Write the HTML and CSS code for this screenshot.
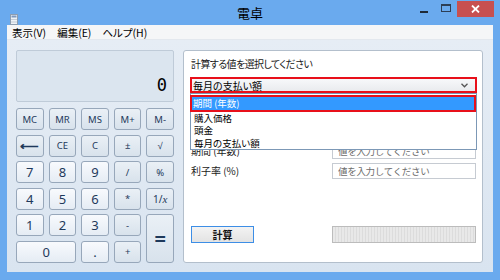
FILE: index.html
```html
<!DOCTYPE html>
<html lang="ja">
<head>
    <meta charset="UTF-8">
    <title>電卓</title>
    <link rel="stylesheet" href="styles.css">
</head>
<body>
    <div class="window">
        <div class="titlebar">
            <div class="title-left">
                <svg class="app-icon" width="8" height="11" viewBox="0 0 8 11">
                    <rect x="0.5" y="0.5" width="7" height="10" fill="#eef2f6" stroke="#8d9db0"/>
                    <rect x="1.5" y="1.5" width="5" height="2" fill="#7d98bd"/>
                    <rect x="1.5" y="5" width="1" height="1" fill="#9aa8b8"/>
                    <rect x="3.5" y="5" width="1" height="1" fill="#9aa8b8"/>
                    <rect x="5.5" y="5" width="1" height="1" fill="#9aa8b8"/>
                    <rect x="1.5" y="7.5" width="1" height="1" fill="#9aa8b8"/>
                    <rect x="3.5" y="7.5" width="1" height="1" fill="#9aa8b8"/>
                    <rect x="5.5" y="7.5" width="1" height="1" fill="#9aa8b8"/>
                </svg>
            </div>
            <div class="title">電卓</div>
            <div class="controls">
                <span class="ctl"><span class="min-icon"></span></span>
                <span class="ctl"><span class="max-icon"></span></span>
                <span class="close">
                    <svg width="9" height="8" viewBox="0 0 9 8"><path d="M1 0.5 L8 7.5 M8 0.5 L1 7.5" stroke="#fff" stroke-width="1.8"/></svg>
                </span>
            </div>
        </div>

        <div class="client">
            <div class="menubar">
                <span>表示(V)</span>
                <span>編集(E)</span>
                <span>ヘルプ(H)</span>
            </div>

            <div class="content">
                <div class="calc">
                    <div class="display">0</div>
                    <div class="keys">
                        <button class="key fn">MC</button>
                        <button class="key fn">MR</button>
                        <button class="key fn">MS</button>
                        <button class="key fn">M+</button>
                        <button class="key fn">M-</button>

                        <button class="key fn arrow">⟵</button>
                        <button class="key fn">CE</button>
                        <button class="key fn">C</button>
                        <button class="key fn">±</button>
                        <button class="key fn">√</button>

                        <button class="key num">7</button>
                        <button class="key num">8</button>
                        <button class="key num">9</button>
                        <button class="key fn">/</button>
                        <button class="key fn">%</button>

                        <button class="key num">4</button>
                        <button class="key num">5</button>
                        <button class="key num">6</button>
                        <button class="key fn">*</button>
                        <button class="key fn inv">1/<i>x</i></button>

                        <button class="key num">1</button>
                        <button class="key num">2</button>
                        <button class="key num">3</button>
                        <button class="key fn">-</button>
                        <button class="key fn equals">=</button>

                        <button class="key num zero">0</button>
                        <button class="key num">.</button>
                        <button class="key fn">+</button>
                    </div>
                </div>

                <div class="panel">
                    <p class="prompt">計算する値を選択してください</p>
                    <div class="picker">
                        <div class="select">
                            <span>毎月の支払い額</span>
                            <svg class="chev" width="7" height="5" viewBox="0 0 7 5"><path d="M0.5 0.8 L3.5 3.8 L6.5 0.8" fill="none" stroke="#555" stroke-width="1.3"/></svg>
                        </div>
                        <ul class="options">
                            <li class="active">期間 (年数)</li>
                            <li>購入価格</li>
                            <li>頭金</li>
                            <li>毎月の支払い額</li>
                        </ul>
                    </div>

                    <div class="fields">
                        <label>期間 (年数)</label>
                        <input type="text" placeholder="値を入力してください">
                        <label>利子率 (%)</label>
                        <input type="text" placeholder="値を入力してください">
                    </div>

                    <div class="actions">
                        <button class="calc-button">計算</button>
                        <div class="progress"></div>
                    </div>
                </div>
            </div>
        </div>
    </div>
</body>
</html>
```

FILE: styles.css
```css
body {
    margin: 0;
    background-color: #6aaaee;
    font-family: "Noto Sans CJK JP", "Noto Sans", sans-serif;
    font-feature-settings: "palt";
}
.window {
    width: 500px;
    height: 280px;
    background-color: #6aaaee;
    overflow: hidden;
}
.titlebar {
    height: 25px;
    display: grid;
    grid-template-columns: 1fr auto 1fr;
}
.title-left {
    padding: 6px 0 0 10px;
}
.title {
    font-size: 13px;
    line-height: 26px;
    color: #000;
}
.controls {
    display: flex;
    justify-content: flex-end;
    align-items: flex-start;
    padding-right: 6px;
}
.ctl {
    width: 22px;
    height: 17px;
    display: flex;
    justify-content: center;
    align-items: center;
}
.min-icon {
    width: 8px;
    height: 2px;
    background-color: #1e2a38;
    margin-top: 7px;
}
.max-icon {
    width: 8px;
    height: 5px;
    border: 1px solid #2c3e55;
    border-top-width: 2px;
    margin-top: -2px;
}
.close {
    width: 37px;
    height: 16px;
    margin-top: 1px;
    background-color: #c75050;
    display: flex;
    justify-content: center;
    align-items: center;
}
.client {
    margin: 0 7px;
    height: 247px;
    background-color: #dce6f1;
}
.menubar {
    height: 14px;
    background-color: #f5f6f7;
    border-bottom: 1px solid #e3e8ee;
    display: flex;
    gap: 11px;
    padding-left: 5px;
    font-size: 10.5px;
    line-height: 15px;
    color: #000;
}
.content {
    display: flex;
    gap: 9px;
    padding: 10px 10px 9px 9px;
    height: 213px;
    background: linear-gradient(#e6edf5, #d9e4f0);
}
.calc {
    width: 158px;
    display: flex;
    flex-direction: column;
    gap: 6px;
}
.display {
    height: 52px;
    box-sizing: border-box;
    border: 1px solid #bfcbd8;
    border-radius: 2px;
    background-color: #dbe5ef;
    text-align: right;
    padding: 24px 6px 0 0;
    font-family: "DejaVu Sans Mono", monospace;
    font-size: 17px;
    line-height: 20px;
    color: #000;
}
.keys {
    display: grid;
    grid-template-columns: repeat(5, 1fr);
    grid-auto-rows: 22px;
    column-gap: 5px;
    row-gap: 4.6px;
}
.key {
    margin: 0;
    padding: 0;
    border: 1px solid #97a7ba;
    border-radius: 3px;
    font-family: "Noto Sans", sans-serif;
    color: #1e395b;
    cursor: default;
}
.key.num {
    background: linear-gradient(#f8fafd, #e5ecf4);
    font-size: 13px;
}
.key.fn {
    background: linear-gradient(#eaf0f6, #d8e2ec);
    font-size: 9.5px;
}
.key.arrow {
    font-size: 13px;
    font-weight: 700;
}
.key.inv {
    font-size: 10px;
}
.key.inv i {
    font-family: "Liberation Serif", serif;
    font-size: 11px;
}
.key.equals {
    grid-row: span 2;
    font-size: 20px;
    font-weight: 700;
}
.key.zero {
    grid-column: span 2;
}
.panel {
    flex: 1;
    background-color: #fff;
    border: 1px solid #b3bfcc;
    border-radius: 3px;
    padding: 0 6px 0 7px;
    display: flex;
    flex-direction: column;
}
.prompt {
    margin: 6px 0 6px;
    font-size: 10px;
    line-height: 14px;
    letter-spacing: -0.6px;
    color: #1a1a1a;
}
.picker {
    position: relative;
    margin: 0 -1px;
}
.select {
    height: 16px;
    box-sizing: border-box;
    border: 2px solid #e8101a;
    background: linear-gradient(#f7f8fa, #e9ebee);
    display: flex;
    justify-content: space-between;
    align-items: center;
    padding: 0 7px 0 1px;
    font-size: 10px;
    color: #000;
}
.options {
    position: absolute;
    top: 16px;
    left: 0;
    right: 0;
    margin: 0;
    padding: 1px 0 0;
    list-style: none;
    background-color: #fff;
    border: 1px solid #7c98b6;
    z-index: 2;
    font-size: 9.5px;
    color: #000;
}
.options li {
    height: 12.3px;
    line-height: 12.3px;
    padding-left: 3px;
}
.options li.active {
    height: 13px;
    line-height: 13px;
    border: 2px solid #e8101a;
    background-color: #3399ff;
    color: #fff;
    padding-left: 1px;
    margin: 0 0 0 -1px;
}
.fields {
    display: grid;
    grid-template-columns: 1fr 144px;
    grid-auto-rows: 16px;
    row-gap: 4px;
    margin-top: 50px;
    font-size: 10px;
    color: #1a1a1a;
}
.fields label {
    line-height: 16px;
}
.fields input {
    margin: 0;
    padding: 0 0 0 5px;
    box-sizing: border-box;
    height: 16px;
    border: 1px solid #c6cbd2;
    font-family: inherit;
    font-size: 9.5px;
    letter-spacing: -0.3px;
}
.fields input::placeholder {
    color: #6d6d6d;
}
.actions {
    margin-top: 47px;
    display: flex;
    justify-content: space-between;
}
.calc-button {
    width: 63px;
    height: 17px;
    margin: 0;
    padding: 0;
    border: 1px solid #3d8ee6;
    background: linear-gradient(#f3f3f3, #e3e3e3);
    font-family: inherit;
    font-size: 10px;
    font-weight: 700;
    color: #111;
}
.progress {
    width: 144px;
    height: 17px;
    box-sizing: border-box;
    border: 1px solid #bcbcbc;
    background: repeating-linear-gradient(90deg, #e8e8e8 0 2px, #dcdcdc 2px 3px);
}
```
